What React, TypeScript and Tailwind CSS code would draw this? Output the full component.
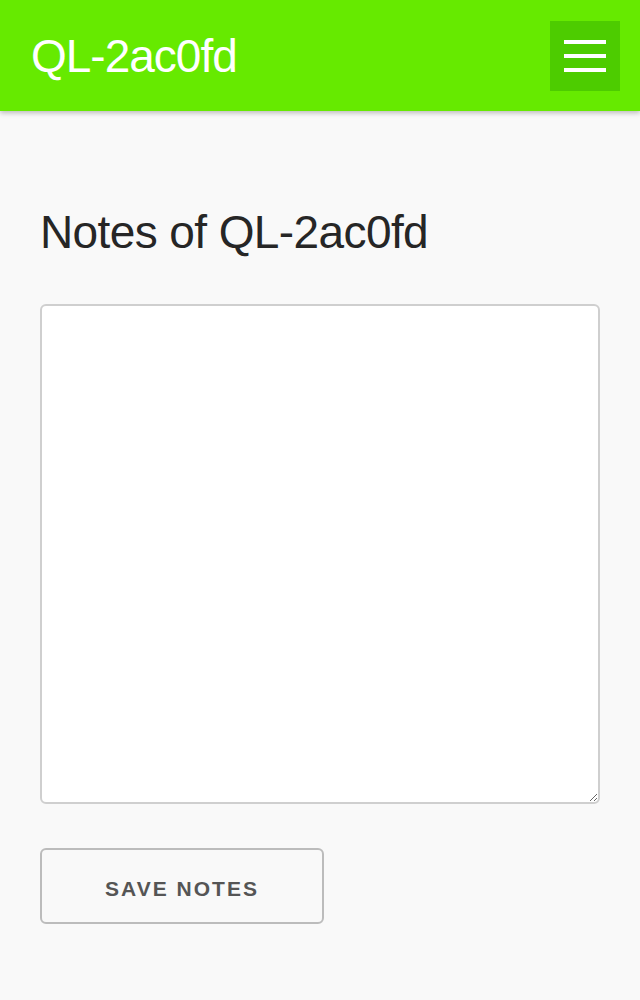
import { useState } from 'react';

export default function App() {
  const [notes, setNotes] = useState('');

  return (
    <div className="min-h-screen bg-[#f9f9f9]" style={{ fontFamily: '"Liberation Sans", Arial, sans-serif' }}>
      {/* top bar */}
      <header className="h-[111px] bg-[#66ea00] flex items-center justify-between pl-[31px] pr-5 shadow-[0_2px_5px_rgba(0,0,0,0.25)]">
        <h1 className="text-white text-[46px] tracking-[-1px] leading-none">QL-2ac0fd</h1>
        <button className="w-[70px] h-[70px] bg-[#4dcc00] flex flex-col items-center justify-center gap-[10px]">
          <span className="block w-[42px] h-[4px] bg-white"></span>
          <span className="block w-[42px] h-[4px] bg-white"></span>
          <span className="block w-[42px] h-[4px] bg-white"></span>
        </button>
      </header>

      <main className="px-10 pt-[98px] pb-10">
        <h2 className="text-[46px] leading-none text-[#262626] tracking-[-0.6px]">Notes of QL-2ac0fd</h2>

        <textarea
          value={notes}
          onChange={(e) => setNotes(e.target.value)}
          className="mt-[49px] block w-full h-[500px] bg-white border-2 border-[#cfcfcf] rounded-[6px] outline-none p-3 resize-y"
        />

        <button className="mt-[44px] w-[284px] h-[76px] pt-[5px] border-2 border-[#bcbcbc] rounded-[6px] text-[#555] font-bold text-[21px] tracking-[2px] bg-[#f9f9f9]">
          SAVE NOTES
        </button>
      </main>
    </div>
  );
}
